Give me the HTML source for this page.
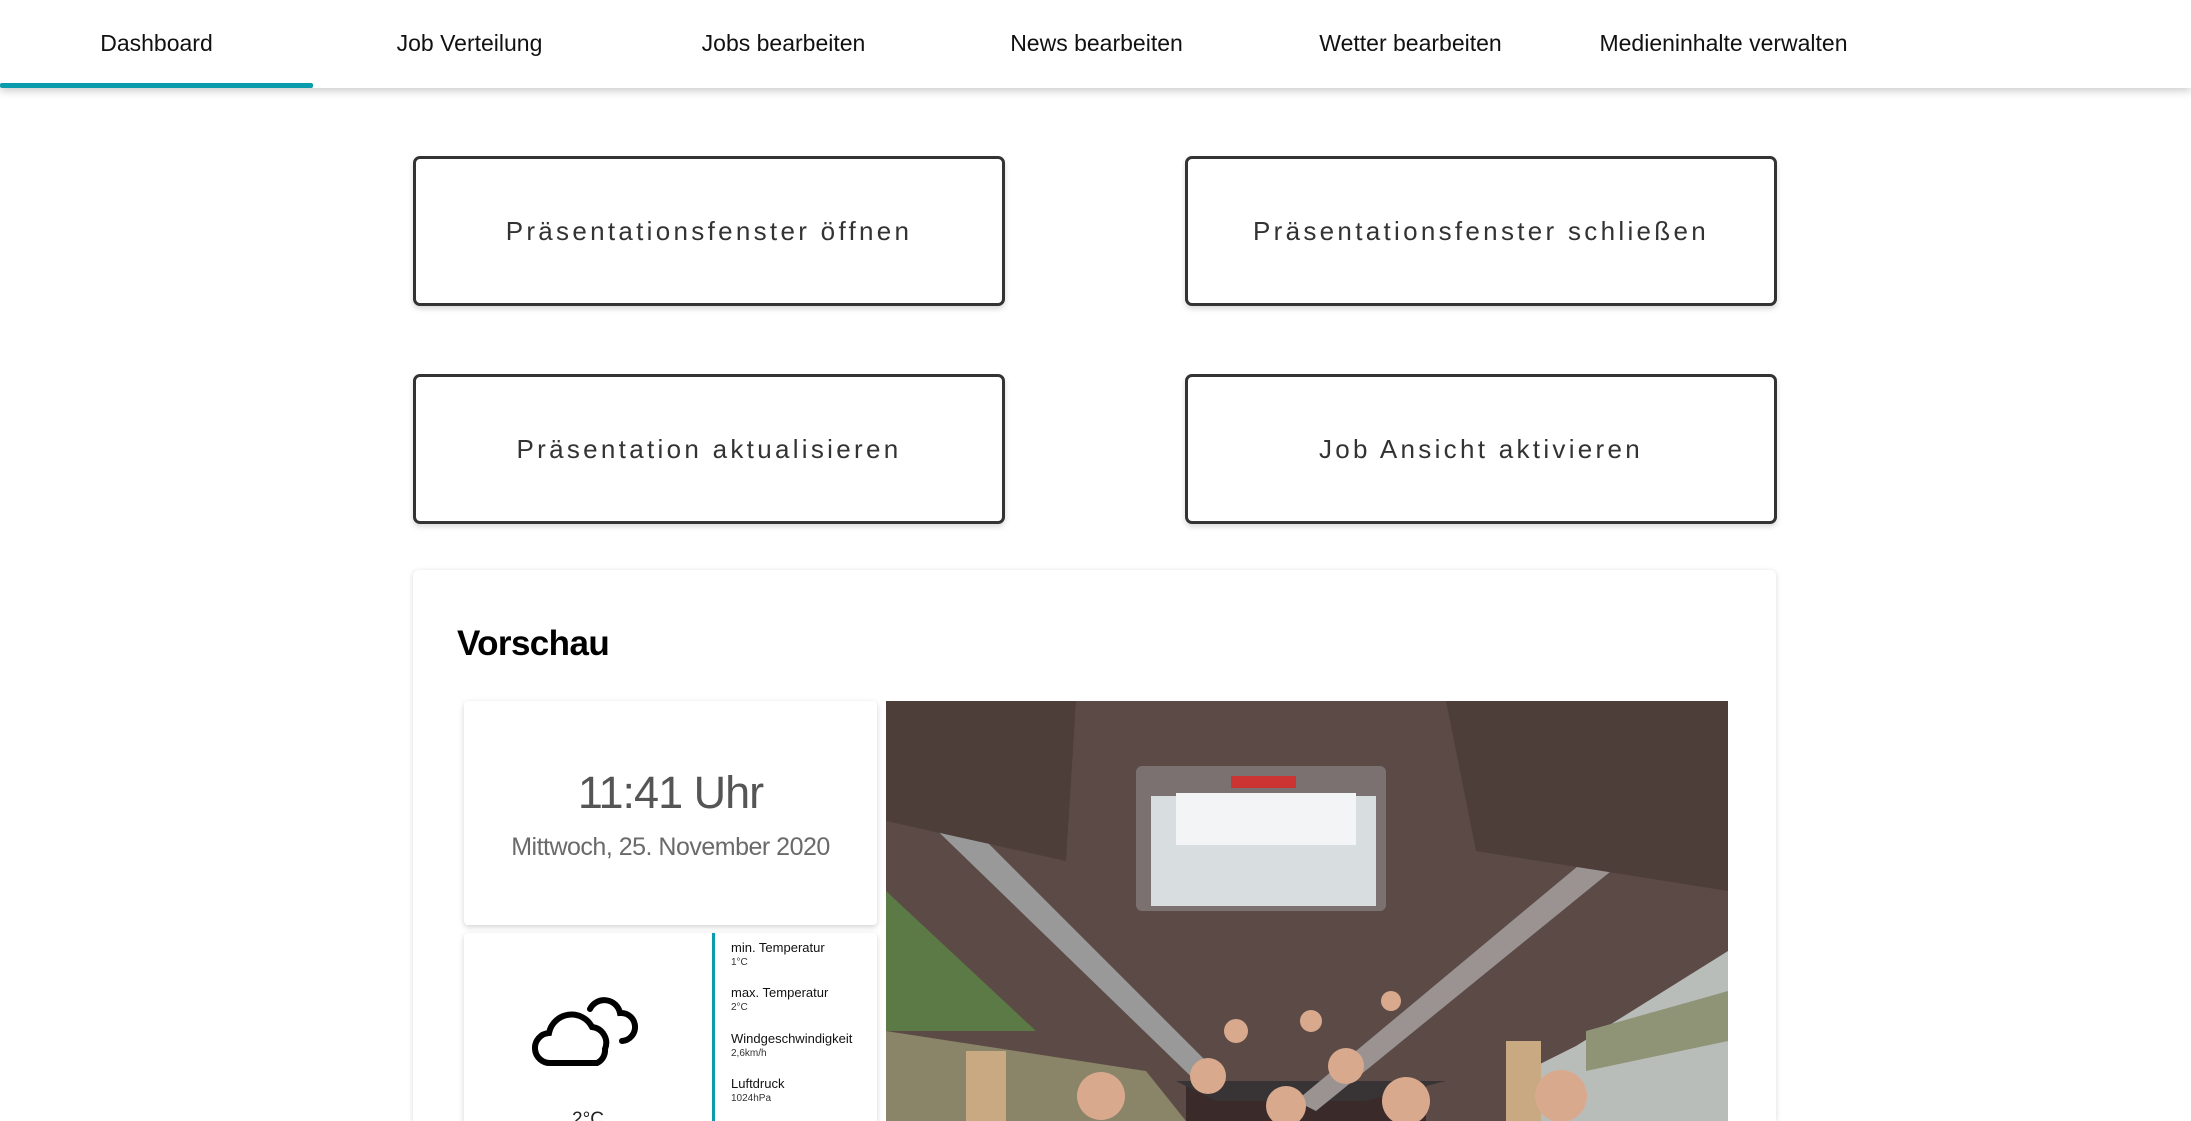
<!DOCTYPE html>
<html><head><meta charset="utf-8"><style>
*{margin:0;padding:0;box-sizing:border-box}
html,body{width:2191px;height:1121px;overflow:hidden}
body{background:#fff;font-family:"Liberation Sans",Roboto,sans-serif;position:relative;color:#000}
.nav{position:absolute;left:0;top:0;width:2191px;height:88px;background:#fff;box-shadow:0 3px 8px rgba(0,0,0,.2);z-index:2}
.tab{position:absolute;top:0;height:88px;width:313px;text-align:center;line-height:86px;font-size:23px;color:#111}
.ind{position:absolute;left:0;top:83px;width:313px;height:5px;background:#0a9cad;border-radius:2px}
.btn{position:absolute;width:592px;height:150px;border:3px solid #333;border-radius:7px;background:#fff;box-shadow:0 3px 6px rgba(0,0,0,.15);text-align:center;line-height:144px;font-size:26px;letter-spacing:3.3px;color:#333}
.card{position:absolute;left:413px;top:570px;width:1363px;height:551px;background:#fff;border-radius:6px 6px 0 0;box-shadow:0 1px 6px rgba(0,0,0,.15)}
.tile{position:absolute;background:#fff;border-radius:4px;box-shadow:0 2px 6px rgba(0,0,0,.18);overflow:hidden}
.lab{position:absolute;left:731px;font-size:13px;color:#111;line-height:15px}
.lab small{display:block;font-size:10px;color:#333}
#clip{position:absolute;left:0;top:0;width:2191px;height:1121px;overflow:hidden}
</style></head><body><div id="clip">
<div class="nav">
<div class="tab" style="left:0">Dashboard</div>
<div class="tab" style="left:313px">Job Verteilung</div>
<div class="tab" style="left:627px">Jobs bearbeiten</div>
<div class="tab" style="left:940px">News bearbeiten</div>
<div class="tab" style="left:1254px">Wetter bearbeiten</div>
<div class="tab" style="left:1567px">Medieninhalte verwalten</div>
<div class="ind"></div>
</div>
<div class="btn" style="left:413px;top:156px">Präsentationsfenster öffnen</div>
<div class="btn" style="left:1185px;top:156px">Präsentationsfenster schließen</div>
<div class="btn" style="left:413px;top:374px">Präsentation aktualisieren</div>
<div class="btn" style="left:1185px;top:374px">Job Ansicht aktivieren</div>
<div class="card"></div>
<div style="position:absolute;left:457px;top:624px;font-size:35px;font-weight:bold;letter-spacing:-.6px">Vorschau</div>
<div class="tile" style="left:464px;top:701px;width:413px;height:224px">
<div style="position:absolute;top:66px;width:100%;text-align:center;font-size:45px;color:#555;letter-spacing:-1px">11:41 Uhr</div>
<div style="position:absolute;top:132px;width:100%;text-align:center;font-size:25px;color:#6a6a6a;letter-spacing:-.5px">Mittwoch, 25. November 2020</div>
</div>
<div class="tile" style="left:464px;top:933px;width:413px;height:188px;border-radius:4px 4px 0 0">
<div style="position:absolute;left:248px;top:0;width:3px;height:188px;background:#0a9cad"></div>
<svg style="position:absolute;left:68px;top:56px" width="114" height="80" viewBox="0 0 112 80"><g fill="none" stroke="#000" stroke-width="6" stroke-linecap="round"><path d="M56 74H18a15 15 0 0 1-2-30a23 23 0 0 1 43-6a16 16 0 0 1 13 22a14 14 0 0 1-8 14z"/><path d="M57 20a16 16 0 0 1 30 4a14 14 0 0 1 2 28"/></g></svg>
<div style="position:absolute;left:0;width:248px;top:176px;text-align:center;font-size:19px;color:#222">2°C</div>
</div>
<div class="lab" style="top:940px">min. Temperatur<small>1°C</small></div>
<div class="lab" style="top:985px">max. Temperatur<small>2°C</small></div>
<div class="lab" style="top:1031px">Windgeschwindigkeit<small>2,6km/h</small></div>
<div class="lab" style="top:1076px">Luftdruck<small>1024hPa</small></div>
<svg style="position:absolute;left:886px;top:701px" width="842" height="420" viewBox="0 0 842 420">
<rect width="842" height="420" fill="#5b4a45"/>
<polygon points="0,330 0,190 150,330" fill="#5c7a45"/>
<polygon points="0,420 0,330 260,370 300,420" fill="#8a8468"/>
<polygon points="842,250 842,420 620,420 640,370 690,345" fill="#b9bdb9"/>
<polygon points="842,290 842,340 700,370 700,330" fill="#8f9476"/>
<rect x="300" y="380" width="240" height="40" fill="#3a2a2a"/>
<polygon points="290,380 560,380 480,400 330,400" fill="#383436"/>
<rect x="250" y="65" width="250" height="145" rx="6" fill="#7b7170"/>
<rect x="265" y="95" width="225" height="110" fill="#d8dde0"/>
<rect x="290" y="92" width="180" height="52" fill="#f2f4f5"/>
<rect x="345" y="75" width="65" height="12" fill="#c33"/>
<polygon points="0,40 340,380 320,390 0,80" fill="#999"/>
<polygon points="842,40 842,75 430,410 410,400" fill="#9a9392"/>
<polygon points="0,0 190,0 180,160 0,120" fill="#4e3e3a"/>
<polygon points="842,0 560,0 590,150 842,190" fill="#4e3e3a"/>
<rect x="80" y="350" width="40" height="70" fill="#c9a981"/>
<rect x="620" y="340" width="35" height="80" fill="#c9a981"/>
<g fill="#d9a98e"><circle cx="215" cy="395" r="24"/><circle cx="322" cy="375" r="18"/><circle cx="400" cy="405" r="20"/><circle cx="460" cy="365" r="18"/><circle cx="520" cy="400" r="24"/><circle cx="675" cy="395" r="26"/><circle cx="350" cy="330" r="12"/><circle cx="425" cy="320" r="11"/><circle cx="505" cy="300" r="10"/></g>
</svg>
</div></body></html>
